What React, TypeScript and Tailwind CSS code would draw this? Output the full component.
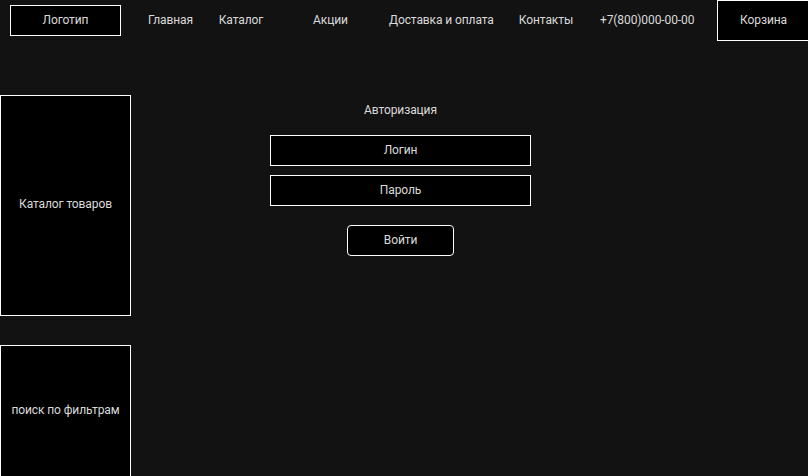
const navItems = [
  { label: "Главная", w: "w-[79px]" },
  { label: "Каталог", w: "w-[62px]" },
  { label: "Акции", w: "w-[117px]" },
  { label: "Доставка и оплата", w: "w-[103px]" },
  { label: "Контакты", w: "w-[108px]" },
  { label: "+7(800)000-00-00", w: "w-[91px]" },
]

const App = () => (
  <div className="w-[808px] h-[476px] overflow-hidden bg-[#121212] text-[#dadada] text-[12px] leading-[16px] tracking-[-0.1px] font-['Roboto','Liberation_Sans',sans-serif]">
    <header className="flex h-[41px] items-start">
      <div className="ml-[10px] mt-[5px] flex h-[31px] w-[111px] shrink-0 items-center justify-center border border-white bg-black pb-[1px]">
        Логотип
      </div>
      <nav className="ml-[10px] flex h-[40px] items-center">
        {navItems.map((item) => (
          <span key={item.label} className={`${item.w} shrink-0 whitespace-nowrap text-center`}>
            <span className="inline-block">{item.label}</span>
          </span>
        ))}
      </nav>
      <div className="ml-[26px] flex h-[41px] w-[93px] shrink-0 items-center justify-center border border-white bg-black pb-[2px]">
        Корзина
      </div>
    </header>

    <div className="flex">
      <aside className="flex w-[131px] shrink-0 flex-col gap-[29px] pt-[54px]">
        <div className="flex h-[221px] items-center justify-center border border-white bg-black pb-[3px]">
          Каталог товаров
        </div>
        <div className="flex h-[140px] items-start justify-center border border-white bg-black pt-[56px]">
          поиск по фильтрам
        </div>
      </aside>

      <main className="flex-1 pl-[139px] pt-[61px]">
        <div className="flex w-[261px] flex-col items-center">
          <h1 className="text-[12px] font-normal">Авторизация</h1>
          <div className="mt-[17px] flex h-[31px] w-full items-center justify-center border border-white bg-black pb-[2px]">
            Логин
          </div>
          <div className="mt-[9px] flex h-[31px] w-full items-center justify-center border border-white bg-black pb-[1px]">
            Пароль
          </div>
          <button className="mt-[19px] flex h-[31px] w-[107px] items-center justify-center rounded-[4px] border border-white bg-black pb-[2px] text-[#dadada]">
            Войти
          </button>
        </div>
      </main>
    </div>
  </div>
)

export default App
